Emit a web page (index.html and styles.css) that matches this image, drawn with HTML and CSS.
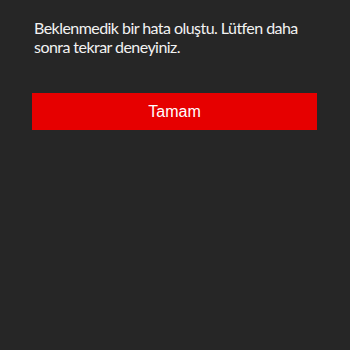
FILE: index.html
```html
<!DOCTYPE html>
<html lang="tr">

<head>
    <meta charset="UTF-8">
    <meta name="viewport" content="width=device-width, initial-scale=1.0">
    <title>Hata</title>
    <link rel="stylesheet" href="styles.css">
</head>

<body>
    <div class="dialog">
        <p class="message">Beklenmedik bir hata oluştu. Lütfen daha sonra tekrar deneyiniz.</p>
        <button class="btn">Tamam</button>
    </div>
</body>

</html>
```

FILE: styles.css
```css
* {
    margin: 0;
    padding: 0;
    box-sizing: border-box;
}
html, body {
    width: 100%;
    height: 100%;
    background-color: #262626;
}
.dialog {
    padding: 18px 33px 0 32px;
}
.message {
    padding-left: 2px;
    color: #f2f2f2;
    font-family: Lato, sans-serif;
    font-size: 16px;
    line-height: 19px;
    letter-spacing: -0.55px;
}
.btn {
    display: block;
    width: 100%;
    height: 37px;
    margin-top: 37px;
    border: none;
    background-color: #e60000;
    color: #fff;
    font-family: "Liberation Sans", Arial, sans-serif;
    font-size: 16px;
}
```
